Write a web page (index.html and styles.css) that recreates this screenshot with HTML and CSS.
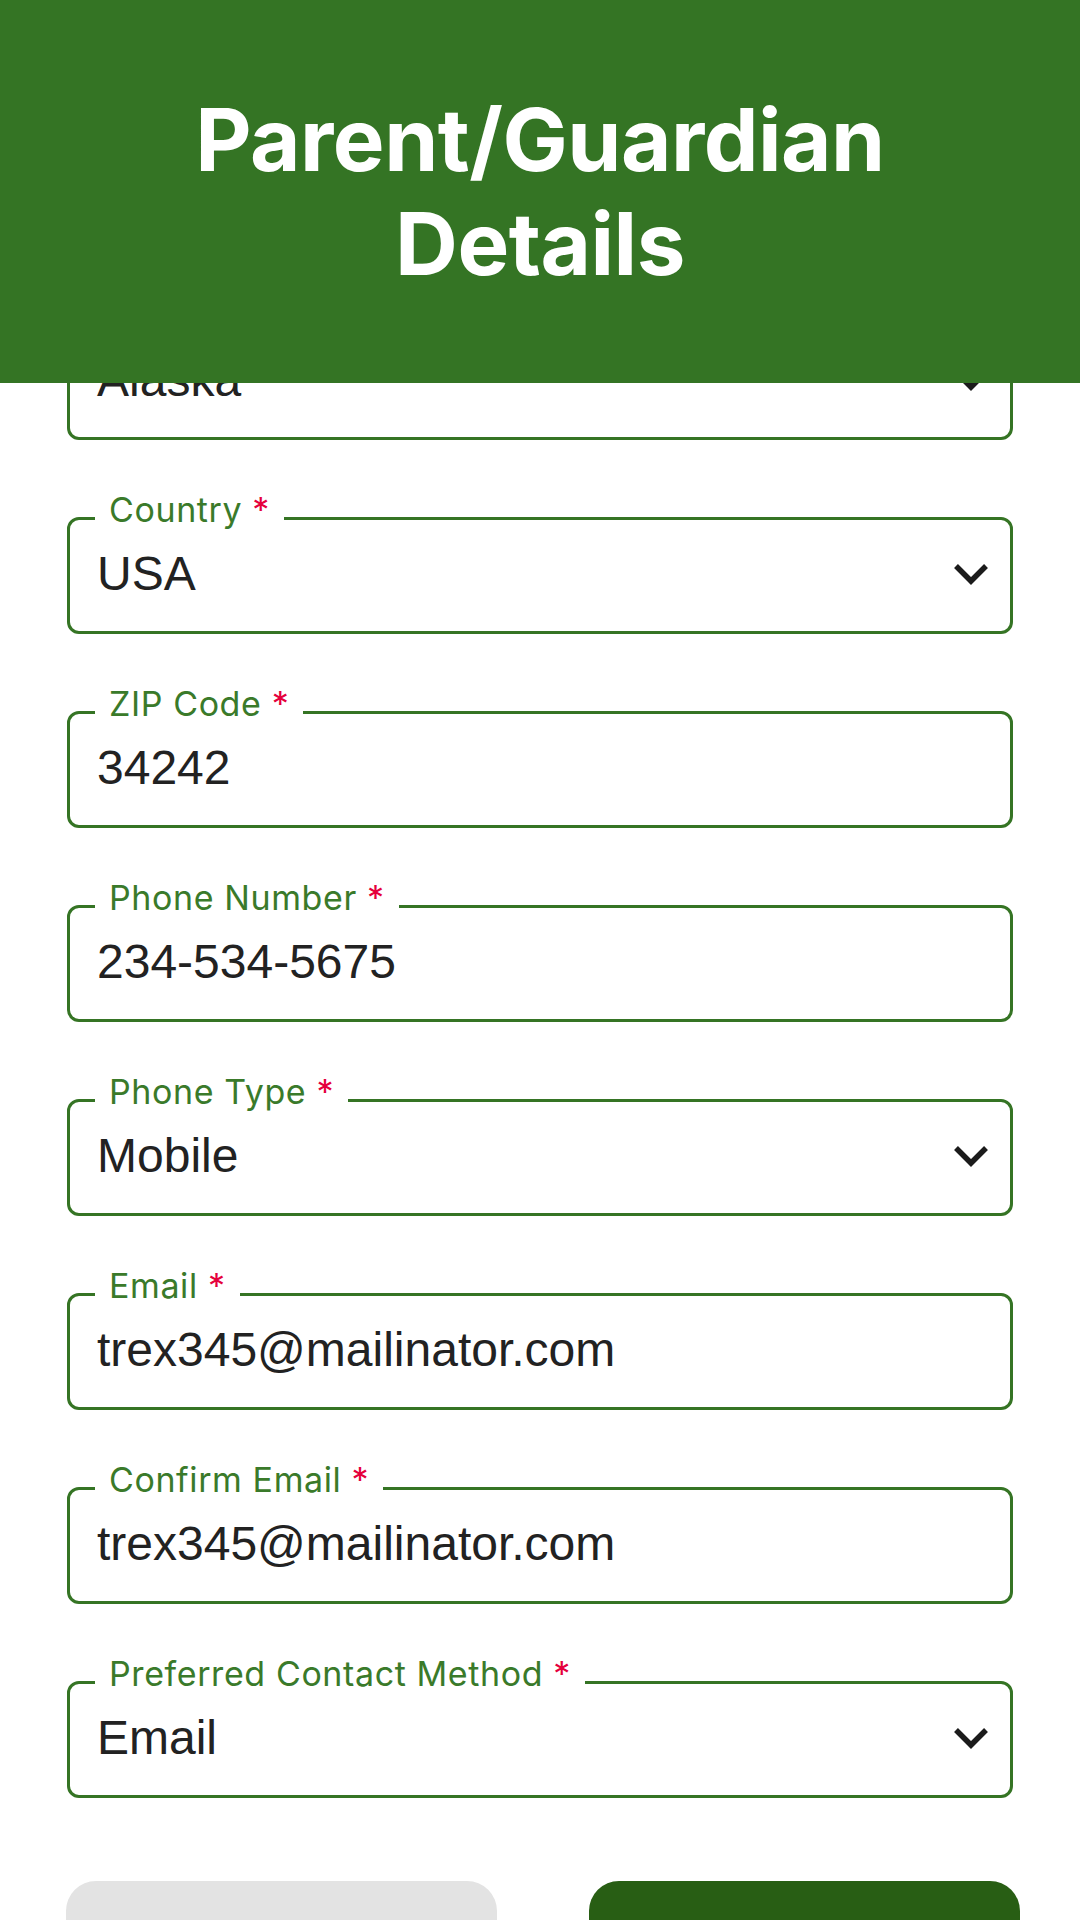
FILE: index.html
```html
<!DOCTYPE html>
<html lang="en">
<head>
<meta charset="utf-8">
<title>Parent/Guardian Details</title>
<link rel="stylesheet" href="styles.css">
</head>
<body>
<header class="topbar">
  <h1 class="title">Parent/Guardian<br>Details</h1>
</header>
<main class="form">
  <div class="field">
    <div class="box select">
      <span class="label">State <span class="req">*</span></span>
      <span class="value">Alaska</span>
      <svg class="chev" viewBox="0 0 36 22" width="36" height="22"><polyline points="3,3 18,18 33,3" fill="none" stroke="#1b1b1b" stroke-width="5.5"/></svg>
    </div>
  </div>
  <div class="field">
    <div class="box select">
      <span class="label">Country <span class="req">*</span></span>
      <span class="value">USA</span>
      <svg class="chev" viewBox="0 0 36 22" width="36" height="22"><polyline points="3,3 18,18 33,3" fill="none" stroke="#1b1b1b" stroke-width="5.5"/></svg>
    </div>
  </div>
  <div class="field">
    <div class="box">
      <span class="label">ZIP Code <span class="req">*</span></span>
      <span class="value">34242</span>
    </div>
  </div>
  <div class="field">
    <div class="box">
      <span class="label">Phone Number <span class="req">*</span></span>
      <span class="value">234-534-5675</span>
    </div>
  </div>
  <div class="field">
    <div class="box select">
      <span class="label">Phone Type <span class="req">*</span></span>
      <span class="value">Mobile</span>
      <svg class="chev" viewBox="0 0 36 22" width="36" height="22"><polyline points="3,3 18,18 33,3" fill="none" stroke="#1b1b1b" stroke-width="5.5"/></svg>
    </div>
  </div>
  <div class="field">
    <div class="box">
      <span class="label">Email <span class="req">*</span></span>
      <span class="value">trex345@mailinator.com</span>
    </div>
  </div>
  <div class="field">
    <div class="box">
      <span class="label">Confirm Email <span class="req">*</span></span>
      <span class="value">trex345@mailinator.com</span>
    </div>
  </div>
  <div class="field">
    <div class="box select">
      <span class="label">Preferred Contact Method <span class="req">*</span></span>
      <span class="value">Email</span>
      <svg class="chev" viewBox="0 0 36 22" width="36" height="22"><polyline points="3,3 18,18 33,3" fill="none" stroke="#1b1b1b" stroke-width="5.5"/></svg>
    </div>
  </div>
  <div class="actions">
    <button class="btn btn-back" type="button"></button>
    <button class="btn btn-next" type="button"></button>
  </div>
</main>
</body>
</html>
```

FILE: styles.css
```css
* { box-sizing: border-box; }
html, body { margin: 0; padding: 0; background: #ffffff; }
body { font-family: "Inter", "Liberation Sans", sans-serif; }

.topbar {
  position: fixed;
  top: 0; left: 0; right: 0;
  height: 383px;
  background: #347424;
  display: flex;
  align-items: center;
  justify-content: center;
  z-index: 10;
}
.title {
  margin: 0;
  color: #ffffff;
  font-family: "Inter", sans-serif;
  font-weight: 700;
  font-size: 87px;
  line-height: 104px;
  text-align: center;
  letter-spacing: -0.5px;
}

.form {
  padding: 323px 67px 0 67px;
  display: flex;
  flex-direction: column;
  gap: 77px;
}
.box {
  position: relative;
  height: 117px;
  border: 3px solid #357424;
  border-radius: 12px;
  display: flex;
  align-items: center;
  padding: 0 21px 4px 27px;
}
.label {
  position: absolute;
  left: 25px;
  top: -30px;
  padding: 0 14px;
  background: #ffffff;
  color: #3a7a2a;
  font-family: "Inter", sans-serif;
  font-size: 34px;
  line-height: 40px;
  letter-spacing: 0.6px;
  white-space: nowrap;
}
.req { color: #e5003c; }
.value {
  flex: 1;
  font-family: "Liberation Sans", Arial, sans-serif;
  font-size: 48px;
  color: #222222;
}
.chev { flex: none; }

.actions {
  margin-top: 6px;
  display: flex;
  justify-content: space-between;
  padding-bottom: 40px;
}
.btn {
  width: 431px;
  height: 110px;
  border: none;
  border-radius: 30px;
}
.btn-back { background: #e3e3e3; margin-left: -1px; }
.btn-next { background: #285e14; margin-right: -7px; }
```
